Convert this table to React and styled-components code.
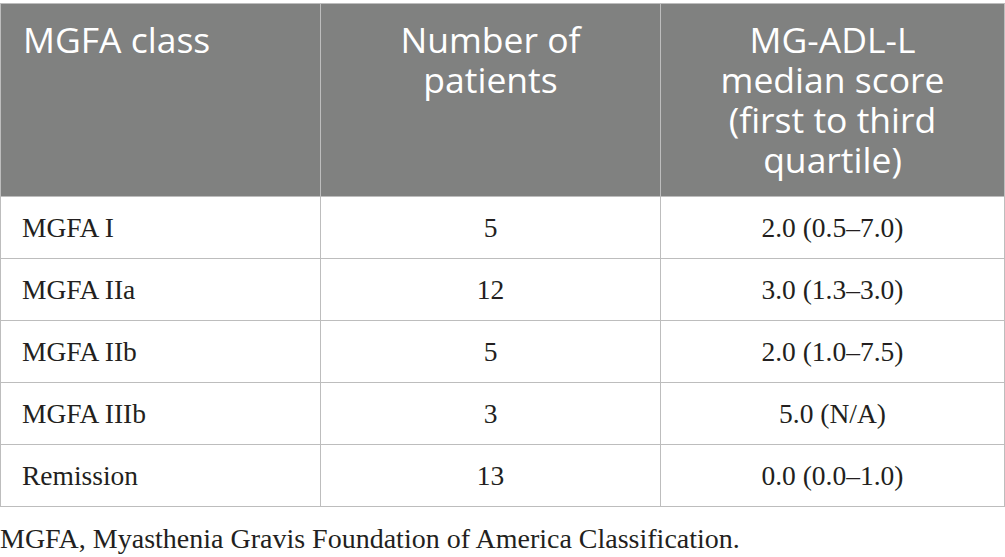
import React from 'react'
import styled, { createGlobalStyle } from 'styled-components'

const GlobalStyle = createGlobalStyle`
  html, body {
    margin: 0;
    padding: 0;
    background: #fff;
  }
`

const Page = styled.div`
  width: 1005px;
  padding-top: 3px;
  box-sizing: border-box;
`

const Table = styled.table`
  width: 1004px;
  border-collapse: collapse;
  table-layout: fixed;
`

const HeadCell = styled.th`
  background: #808180;
  color: #fff;
  font-family: 'Open Sans', 'DejaVu Sans', sans-serif;
  font-weight: 400;
  font-size: 35.5px;
  line-height: 40px;
  height: 193px;
  box-sizing: border-box;
  padding: 15px ${p => (p.left ? '22px' : '38px')} 0;
  vertical-align: top;
  text-align: ${p => (p.left ? 'left' : 'center')};
  border: 1px solid #bdbdbd;
`

const Cell = styled.td`
  font-family: 'Liberation Serif', 'Times New Roman', serif;
  font-size: 27.5px;
  color: #231f20;
  height: 62px;
  box-sizing: border-box;
  padding: 0 21px;
  text-align: ${p => (p.left ? 'left' : 'center')};
  border: 1px solid #bdbdbd;
`

const Note = styled.p`
  margin: 16px 0 0;
  font-family: 'Liberation Serif', 'Times New Roman', serif;
  font-size: 28px;
  color: #231f20;
`

const rows = [
  ['MGFA I', '5', '2.0 (0.5–7.0)'],
  ['MGFA IIa', '12', '3.0 (1.3–3.0)'],
  ['MGFA IIb', '5', '2.0 (1.0–7.5)'],
  ['MGFA IIIb', '3', '5.0 (N/A)'],
  ['Remission', '13', '0.0 (0.0–1.0)'],
]

export default function App() {
  return (
    <Page>
      <GlobalStyle />
      <Table>
        <colgroup>
          <col style={{ width: 320 }} />
          <col style={{ width: 340 }} />
          <col style={{ width: 344 }} />
        </colgroup>
        <thead>
          <tr>
            <HeadCell left>MGFA class</HeadCell>
            <HeadCell>Number of patients</HeadCell>
            <HeadCell>MG-ADL-L median score (first to third quartile)</HeadCell>
          </tr>
        </thead>
        <tbody>
          {rows.map(r => (
            <tr key={r[0]}>
              <Cell left>{r[0]}</Cell>
              <Cell>{r[1]}</Cell>
              <Cell>{r[2]}</Cell>
            </tr>
          ))}
        </tbody>
      </Table>
      <Note>MGFA, Myasthenia Gravis Foundation of America Classification.</Note>
    </Page>
  )
}
